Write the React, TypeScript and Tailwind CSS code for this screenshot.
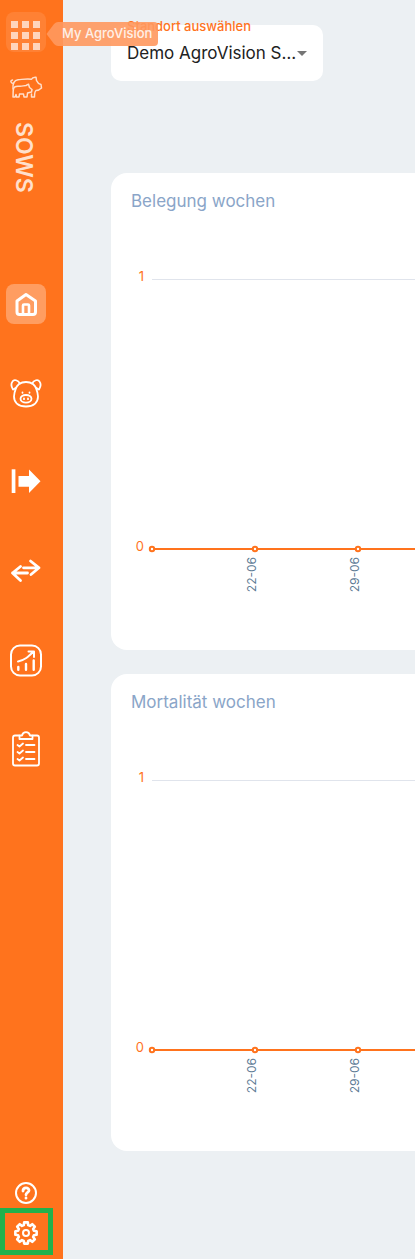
import React from 'react';

const FONT = "font-['Inter','Liberation_Sans',sans-serif]";

// Eight rounded teeth around the centre of the 40x40 icon box
const GEAR_POINTS = Array.from({ length: 8 })
  .flatMap((_, i) => {
    const center = (i * Math.PI) / 4;
    return [
      [-0.27, 8.2],
      [-0.17, 10.8],
      [0.17, 10.8],
      [0.27, 8.2],
    ].map(([offset, radius]) => {
      const angle = center + offset;
      return `${(20 + radius * Math.cos(angle)).toFixed(2)},${(20 + radius * Math.sin(angle)).toFixed(2)}`;
    });
  })
  .join(' ');

function Icon({ children, strokeWidth = 2 }: { children: React.ReactNode; strokeWidth?: number }) {
  return (
    <svg
      className="h-10 w-10 shrink-0"
      viewBox="0 0 40 40"
      fill="none"
      stroke="currentColor"
      strokeWidth={strokeWidth}
      strokeLinecap="round"
      strokeLinejoin="round"
      aria-hidden="true"
    >
      {children}
    </svg>
  );
}

function AppsIcon() {
  return (
    <Icon>
      <g fill="currentColor" stroke="none">
        {[9, 20, 31].map((y) => [5, 16, 27].map((x) => <rect key={`${x}-${y}`} x={x} y={y} width="7" height="7" />))}
      </g>
    </Icon>
  );
}

function SowIcon() {
  return (
    <svg
      className="ml-[3px] h-6 w-[34px]"
      viewBox="0 0 34 24"
      fill="none"
      stroke="currentColor"
      strokeWidth="1.5"
      strokeLinecap="round"
      strokeLinejoin="round"
      aria-hidden="true"
    >
      {/* Sow */}
      <path d="M4 13C3.500 8 5 4 9 3.700C13 3.500 17 2.500 22.500 3.200C23 2 25 1 27 1.200L27.500 4.500C28.500 7 30 8 32 8.500L32.500 12C31 13.500 29 14.500 27 14.500C25.500 15.500 25.500 17 25.500 21H22.500V18" />
      <path d="M4.500 7.500C1.500 7.500 1 4.500 3.500 4" />
      {/* Piglet */}
      <path d="M4.500 13C5 10 8 10 10.500 10.300C13 10.500 15 9.500 17 9.500L19.500 8.200L20.500 11.500L23 13.500L22.500 16L18.500 17L18 21H15L14.500 18H10.500L10 21H7.500L7 18.500L6 21H4C4.300 18 3.800 16 4.500 13Z" />
    </svg>
  );
}

function HomeIcon() {
  return (
    <Icon strokeWidth={3}>
      <path d="M11 17L20 10.500L29.500 17V28Q29.500 30.500 27 30.500H13.500Q11 30.500 11 28Z" />
      <path strokeWidth="2.600" d="M17 30V21.500Q17 20.500 18 20.500H22Q23 20.500 23 21.500V30" />
    </Icon>
  );
}

function PigIcon() {
  return (
    <Icon strokeWidth={1.8}>
      <path d="M13 11C17 8.300 23 8.300 27 11C30.500 14 31.500 18 32 23.500C32 30 27 33.500 20 33.500C13 33.500 8 30 8 23.500C8.500 18 9.500 14 13 11Z" />
      <path d="M14 10.500C12 7 8 6 6.500 8.500C4.500 11 5.500 14 7 16.500C8 16.500 8.500 16 9.500 15" />
      <path d="M26 10.500C28 7 32 6 33.500 8.500C35.500 11 34.500 14 33 16.500C32 16.500 31.500 16 30.500 15" />
      <ellipse cx="20" cy="25.800" rx="5.500" ry="3.800" />
      <path d="M18 25.500V26.200M22 25.500V26.200M16.500 19.500V19.800M23.500 19.500V19.800" />
    </Icon>
  );
}

function MoveOutIcon() {
  return (
    <Icon>
      <g fill="currentColor" stroke="none">
        <rect x="5.700" y="7.300" width="3.700" height="23.700" />
        <path d="M12.500 14H23V7.500L34.500 19.200L23 31V24.800H12.500Z" />
      </g>
    </Icon>
  );
}

function TransferIcon() {
  return (
    <Icon strokeWidth={2.8}>
      <path d="M17.500 16.800H33M24.500 10L33 16.800L25 23.500" />
      <path d="M21.500 22H6.500M14.500 15.500L6.500 22L14.500 29.500" />
    </Icon>
  );
}

function ReportIcon() {
  return (
    <Icon>
      <rect x="5" y="5.500" width="30" height="30" rx="9" />
      <path strokeWidth="2.400" d="M12.300 27V29.800M20 24V29.800M27.700 20.500V29.800" />
      <path d="M12 21.500C19 20 22 17 27.500 11.500M22.500 11.500H28V17" />
    </Icon>
  );
}

function ChecklistIcon() {
  return (
    <Icon strokeWidth={1.8}>
      <path d="M13 6.500H9Q7 6.500 7 8.500V34.500Q7 36.500 9 36.500H31Q33 36.500 33 34.500V8.500Q33 6.500 31 6.500H27" />
      <path d="M13.500 10V6.500H16C17 2 23 2 24 6.500H26.500V10Z" />
      {[16, 23, 30].map((y) => (
        <path key={y} d={`M11.500 ${y}L13.500 ${y + 1.5}L17 ${y - 1.5}M20 ${y}H28.500`} />
      ))}
    </Icon>
  );
}

function HelpIcon() {
  return (
    <Icon strokeWidth={2}>
      <circle cx="20" cy="20" r="10" />
      <path strokeWidth="2.800" d="M17 18C17 14 23 14 23 17.500C23 19.500 20 19.500 20 21.800M20 25V25.200" />
    </Icon>
  );
}

function GearIcon() {
  return (
    <Icon strokeWidth={2.6}>
      <polygon points={GEAR_POINTS} />
      <circle cx="20" cy="20" r="3" strokeWidth="2" />
    </Icon>
  );
}

const NAV_ITEMS = [
  { label: 'Home', icon: HomeIcon, active: true },
  { label: 'Sauen', icon: PigIcon },
  { label: 'Abgang', icon: MoveOutIcon },
  { label: 'Umstallen', icon: TransferIcon },
  { label: 'Berichte', icon: ReportIcon },
  { label: 'Aufgaben', icon: ChecklistIcon },
];

function Sidebar() {
  return (
    <aside className="flex w-[63px] shrink-0 flex-col bg-[#ff731d] pt-3 pb-1 text-white">
      <div className="relative z-10 ml-1.5 w-10">
        <button aria-label="My AgroVision" className="block h-10 w-10 rounded-lg bg-white/10 text-[#ffd5bc]">
          <AppsIcon />
        </button>
        {/* Tooltip */}
        <div className="absolute top-2.5 left-10 flex items-start opacity-90" role="tooltip">
          <svg className="h-6 w-3" viewBox="0 0 12 24" fill="#ff995f" aria-hidden="true">
            <path d="M0.500 12L8 2Q10 0 12 0V24Q10 24 8 22Z" />
          </svg>
          <span className="h-6 rounded-r bg-[#ff995f] pt-[3px] pr-1.5 pl-1 text-[13px] leading-4 font-medium whitespace-nowrap text-[#fff0e6]">
            My AgroVision
          </span>
        </div>
      </div>

      <div className="mt-6 ml-1.5 text-[#ffe0cc]">
        <SowIcon />
      </div>
      <div className="mt-5 flex h-[76px] w-12 justify-center">
        <span className="pt-0.5 text-[23px] leading-8 font-semibold text-[#ffe0cc] [writing-mode:vertical-rl]">SOWS</span>
      </div>

      <nav className="mt-[88px] ml-1.5 flex flex-col gap-[49px]">
        {NAV_ITEMS.map(({ label, icon: ItemIcon, active }) => (
          <button
            key={label}
            aria-label={label}
            className={active ? 'block h-10 w-10 rounded-lg bg-white/30' : 'block h-10 w-10 rounded-lg'}
          >
            <ItemIcon />
          </button>
        ))}
      </nav>

      <div className="mt-auto flex w-[53px] flex-col">
        <button aria-label="Hilfe" className="flex h-[30px] w-[52px] items-center justify-center">
          <HelpIcon />
        </button>
        <button
          aria-label="Einstellungen"
          className="flex h-[47px] items-center justify-center border-5 border-[#22b14c] pt-0.5 pr-0.5"
        >
          <GearIcon />
        </button>
      </div>
    </aside>
  );
}

function LocationSelect() {
  return (
    <div className="relative w-[212px]">
      <label htmlFor="location" className="absolute -top-2 left-4 text-[13px] leading-[18px] font-medium text-[#ff731d]">
        Standort auswählen
      </label>
      <select
        id="location"
        className="h-14 w-full appearance-none rounded-[10px] bg-white pt-0.5 pl-4 text-[17px] text-[#212121] outline-none"
      >
        <option>Demo AgroVision S…</option>
      </select>
      <svg className="pointer-events-none absolute top-[26px] right-4 h-[5px] w-2.5" viewBox="0 0 10 5" aria-hidden="true">
        <path d="M0 0H10L5 5Z" fill="#757575" />
      </svg>
    </div>
  );
}

const POINTS = ['', '22-06', '29-06'];
const POINT_GAP = 103;

function ChartCard({ title }: { title: string }) {
  return (
    <section className="rounded-l-2xl bg-white pt-4">
      <h2 className="px-5 text-[17px] leading-6 text-[#8aa5c8]">{title}</h2>
      <svg className="h-[437px] w-full" role="img" aria-label={title}>
        <line x1="41" x2="100%" y1="66.500" y2="66.500" stroke="#e0e4ec" />
        <g fill="#ff731d" fontSize="13" textAnchor="end">
          <text x="33" y="68">1</text>
          <text x="33" y="338">0</text>
        </g>
        <line x1="41" x2="100%" y1="336" y2="336" stroke="#ff731d" strokeWidth="2" />
        {POINTS.map((date, i) => {
          const x = 41 + i * POINT_GAP;
          return (
            <g key={x}>
              <circle cx={x} cy="336" r="2.200" fill="#fff" stroke="#ff731d" strokeWidth="2" />
              {date && (
                <text transform={`translate(${x + 1} 344) rotate(-90)`} textAnchor="end" fontSize="12" fill="#5c7a94">
                  {date}
                </text>
              )}
            </g>
          );
        })}
      </svg>
    </section>
  );
}

export default function App() {
  return (
    <div className={`${FONT} flex min-h-screen bg-[#ecf0f3]`}>
      <Sidebar />
      <main className="min-w-0 flex-1 pt-[25px] pb-12 pl-12">
        <LocationSelect />
        <div className="mt-[92px] flex flex-col gap-6">
          <ChartCard title="Belegung wochen" />
          <ChartCard title="Mortalität wochen" />
        </div>
      </main>
    </div>
  );
}
